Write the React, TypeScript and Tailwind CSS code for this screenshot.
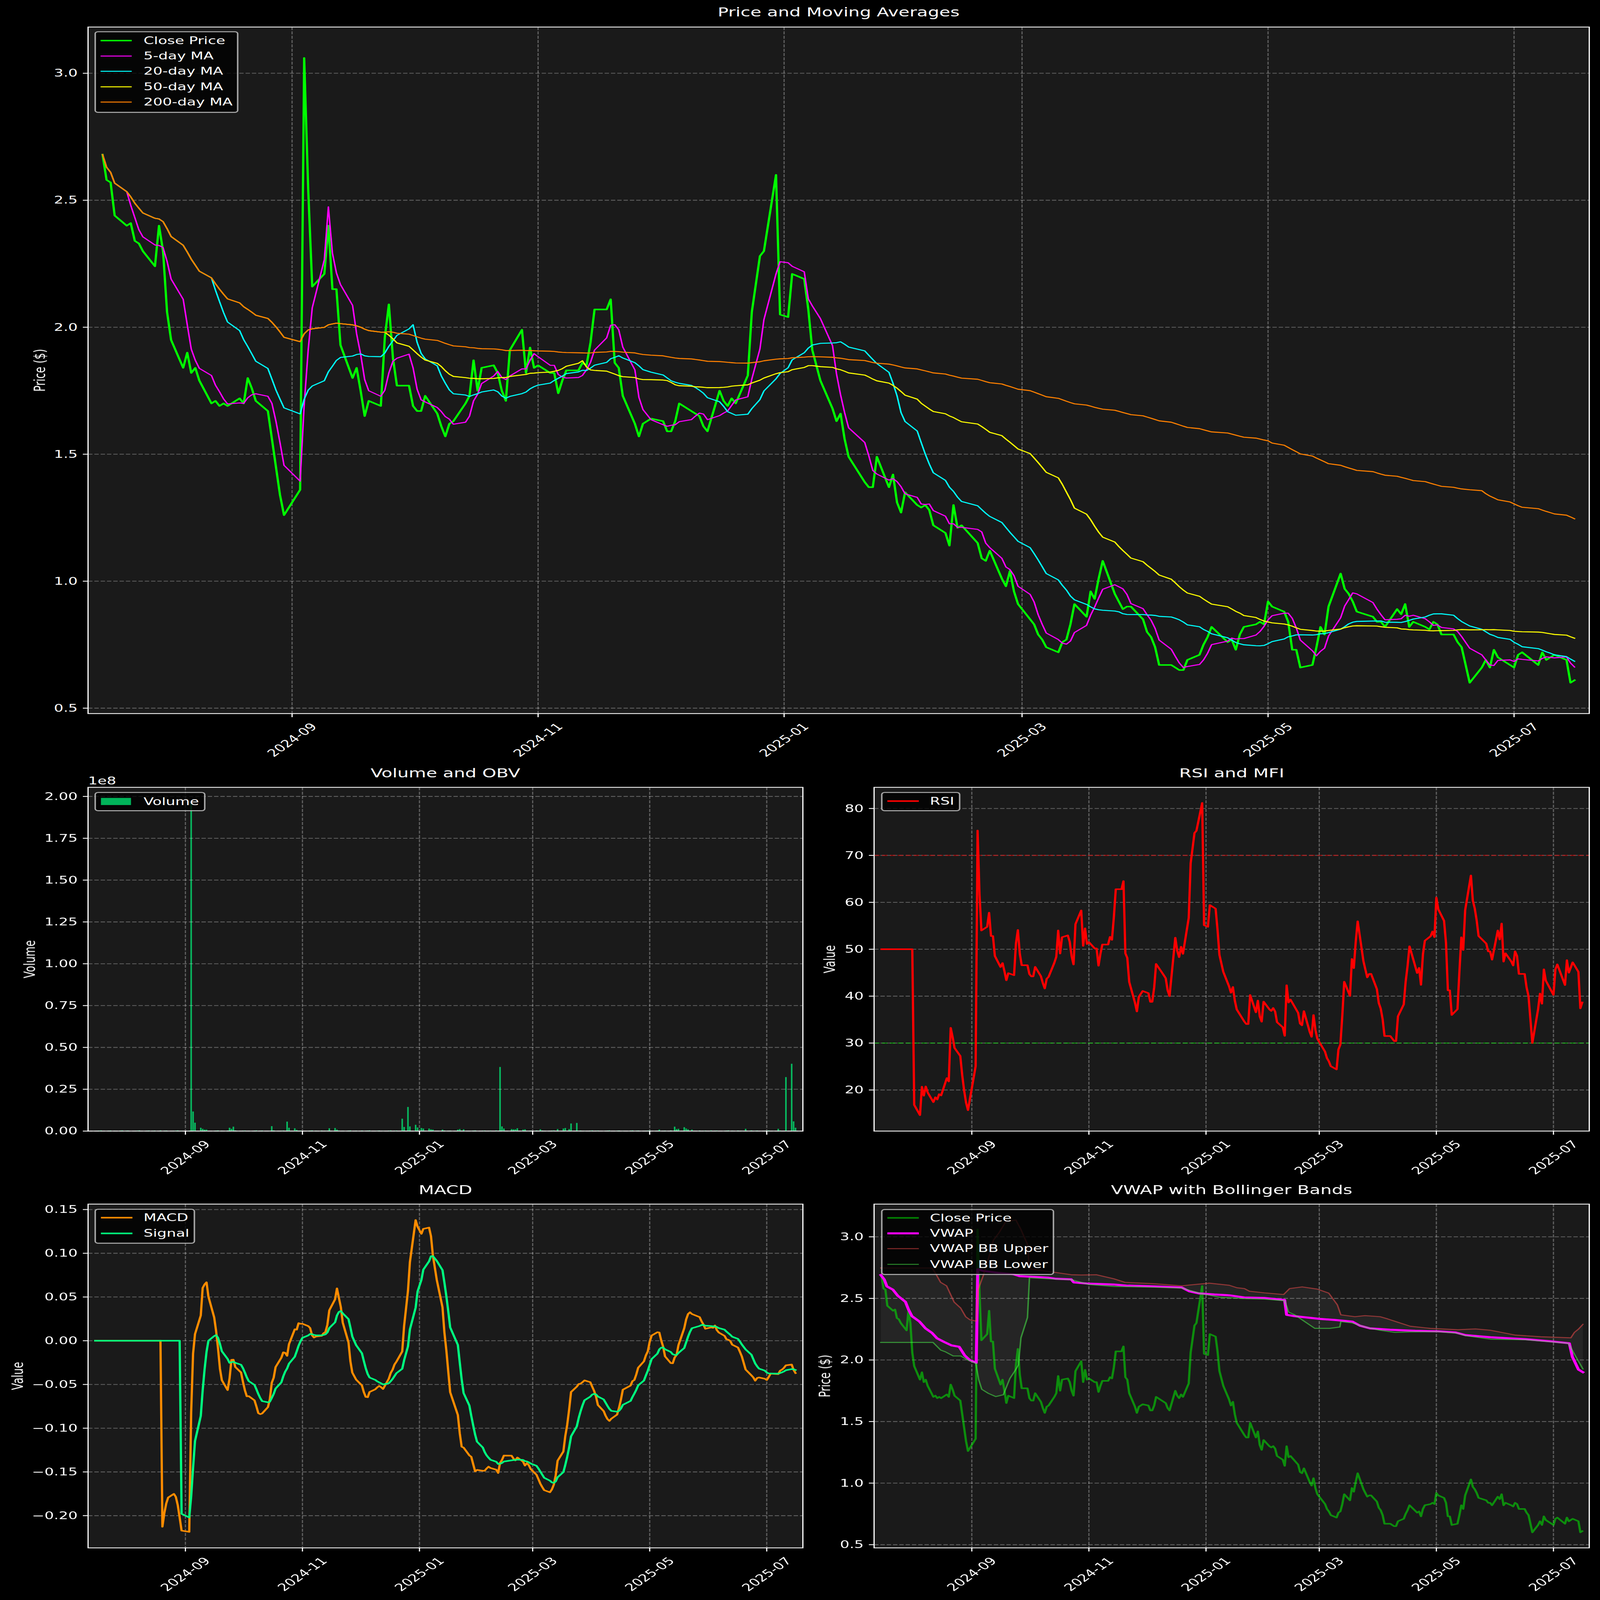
import React, { useEffect, useState } from "react";

type Pt = [number, number];

// zoomed crop coordinates back to page pixels
const crop = (ox: number, oy: number, w: number, h: number, p: number[]): Pt[] => {
  const out: Pt[] = [];
  for (let i = 0; i < p.length; i += 2) out.push([ox + (p[i] * w) / 1568, oy + (p[i + 1] * h) / 1568]);
  return out;
};

// --- trading calendar ---
const holidays = ["2024-09-02", "2024-11-28", "2024-12-25", "2025-01-01", "2025-01-09", "2025-01-20", "2025-02-17", "2025-04-18", "2025-05-26", "2025-06-19", "2025-07-04"];
const days: number[] = [];
for (let d = -47; d <= 318; d++) {
  const date = new Date(Date.UTC(2024, 8, 1 + d));
  const wd = date.getUTCDay();
  if (wd === 0 || wd === 6) continue;
  if (holidays.includes(date.toISOString().slice(0, 10))) continue;
  days.push(d);
}

const mainX = (d: number) => 816 + 11.267 * d;
const leftX = (d: number) => 518 + 5.36 * d;
const rightX = (d: number) => 2715 + 5.363 * d;
const mainY = (v: number) => 298 + (3 - v) * 1032.8;
const volY = (v: number) => 4600 - v * 680.5;
const rsiY = (v: number) => 3288 + (80 - v) * 19.08;
const macdY = (v: number) => 5452.6 - v * 3557;
const vwapY = (v: number) => 5030 + (3 - v) * 500.8;

// --- close price, read off the main chart ---
const closeRaw: Pt[] = [
  ...crop(270, 200, 800, 1900, [30, 352, 52, 437, 76, 447, 98, 557, 165, 591, 186, 584, 208, 642, 230, 652, 260, 675, 320, 727, 342, 593, 364, 680, 385, 880, 408, 925, 430, 977, 473, 1067, 495, 1018, 518, 1085, 540, 1070, 563, 1113, 628, 1187, 650, 1180, 672, 1196, 695, 1188, 718, 1196, 782, 1170, 805, 1187, 827, 1104, 870, 1180, 940, 1214, 962, 1310, 983, 1400, 1003, 1500, 1027, 1562, 1113, 1478, 1137, 30, 1158, 470, 1180, 795, 1250, 752, 1269, 592, 1290, 805, 1313, 805, 1335, 925, 1357, 990, 1402, 1102, 1424, 1070, 1447, 1150, 1468, 1230, 1490, 1180, 1557, 1195]),
  ...crop(1050, 1100, 800, 800, [50, 530, 71, 268, 93, 700, 116, 915, 182, 915, 204, 1078, 227, 1120, 248, 1120, 270, 997, 315, 1090, 337, 1140, 358, 1240, 381, 1322, 403, 1220, 425, 1280, 447, 1210, 490, 1060, 512, 1000, 535, 712, 558, 958, 580, 775, 647, 755, 668, 820, 690, 955, 712, 1040, 735, 630, 801, 470, 822, 815, 845, 612, 867, 775, 889, 752, 955, 815, 978, 815, 1000, 978, 1045, 795, 1110, 795, 1133, 730, 1155, 755, 1178, 570, 1198, 310, 1265, 310, 1288, 228, 1308, 735, 1332, 775, 1353, 1000, 1420, 1220, 1442, 1322, 1464, 1220, 1507, 1178]),
  ...crop(1840, 600, 800, 1600, [25, 1090, 47, 1130, 70, 1130, 92, 1090, 115, 1020, 180, 1050, 226, 1070, 247, 1108, 270, 1128, 315, 1030, 335, 970, 358, 1008, 380, 1028, 402, 1000, 424, 1016, 470, 935, 490, 905, 512, 655, 556, 433, 578, 410, 645, 110, 665, 663, 711, 674, 733, 503, 798, 522, 822, 650, 843, 805, 888, 848, 910, 930, 955, 1040, 975, 1088, 997, 1060, 1020, 1165, 1042, 1232, 1130, 1332, 1153, 1351, 1175, 1351, 1196, 1233, 1263, 1351, 1285, 1303, 1307, 1415, 1329, 1452, 1351, 1375, 1418, 1423, 1440, 1433, 1462, 1423, 1484, 1445, 1505, 1503]),
  ...crop(2620, 1800, 900, 1000, [38, 574, 58, 656, 77, 397, 97, 542, 117, 525, 195, 638, 215, 735, 235, 752, 255, 688, 315, 860, 333, 915, 352, 817, 372, 945, 392, 1026, 470, 1158, 490, 1222, 510, 1258, 529, 1302, 587, 1335, 607, 1268, 626, 1252, 646, 1160, 665, 1027, 724, 1108, 744, 945, 764, 996, 803, 752, 842, 885, 862, 960, 901, 1060, 921, 1043, 941, 1043, 1000, 1125, 1019, 1207, 1039, 1238, 1058, 1300, 1078, 1416, 1137, 1416, 1176, 1448, 1195, 1448, 1215, 1383, 1275, 1351, 1295, 1283, 1314, 1240, 1334, 1172, 1412, 1272, 1432, 1252, 1451, 1320, 1470, 1220, 1490, 1172]),
  ...crop(3500, 2200, 930, 600, [15, 885, 35, 853, 53, 885, 72, 635, 92, 695, 148, 745, 168, 870, 187, 1153, 206, 1153, 226, 1345, 283, 1317, 301, 1135, 320, 905, 339, 995, 358, 692, 414, 340, 433, 505, 452, 560, 472, 650, 491, 747, 566, 800, 585, 860, 604, 860, 624, 908, 680, 717, 699, 778, 718, 663, 737, 913, 757, 852, 812, 908, 832, 942, 851, 852, 870, 880, 889, 990, 946, 990, 965, 1072, 984, 1127, 1023, 1508, 1079, 1340, 1098, 1255, 1118, 1345, 1136, 1150, 1155, 1237, 1232, 1345, 1249, 1207, 1269, 1177, 1345, 1317, 1364, 1177, 1384, 1265, 1422, 1210, 1478, 1262, 1497, 1507, 1518, 1467]),
];

const nearest = (x: number, map: (d: number) => number) => {
  let best = 0;
  days.forEach((d, i) => {
    if (Math.abs(map(d) - x) < Math.abs(map(days[best]) - x)) best = i;
  });
  return best;
};

const close: number[] = (() => {
  const known: (number | null)[] = days.map(() => null);
  closeRaw.forEach(([x, y]) => {
    known[nearest(x, mainX)] = 3 - (y - 298) / 1032.8;
  });
  const out: number[] = [];
  let prev = 0;
  days.forEach((d, i) => {
    if (known[i] !== null) {
      out[i] = known[i] as number;
      prev = i;
      return;
    }
    let next = i;
    while (known[next] === null && next < days.length - 1) next++;
    const t = (d - days[prev]) / (days[next] - days[prev]);
    out[i] = (known[prev] as number) + t * ((known[next] as number) - (known[prev] as number));
  });
  return out.map((v) => Math.round(v * 100) / 100);
})();

const rolling = (s: number[], n: number) =>
  s.map((_, i) => {
    const w = s.slice(Math.max(0, i - n + 1), i + 1);
    return w.reduce((a, b) => a + b, 0) / w.length;
  });

const ewm = (s: (number | null)[], alpha: number, minPeriods: number) => {
  let cur: number | null = null;
  let count = 0;
  return s.map((v) => {
    if (v === null) return null;
    cur = cur === null ? v : (1 - alpha) * cur + alpha * v;
    count++;
    return count >= minPeriods ? cur : null;
  });
};

const rsi = (() => {
  const up = close.map((v, i) => (i > 0 ? Math.max(v - close[i - 1], 0) : 0));
  const down = close.map((v, i) => (i > 0 ? Math.max(close[i - 1] - v, 0) : 0));
  const u = ewm(up, 1 / 14, 14);
  const dn = ewm(down, 1 / 14, 14);
  return u.map((v, i) => {
    if (v === null) return 50;
    const d = dn[i] as number;
    return d === 0 ? 100 : 100 - 100 / (1 + v / d);
  });
})();

const fast = ewm(close, 2 / 13, 12);
const slow = ewm(close, 2 / 27, 26);
const macdRaw = fast.map((v, i) => (v === null || slow[i] === null ? null : v - (slow[i] as number)));
const signal = ewm(macdRaw, 2 / 10, 9).map((v) => v ?? 0);
const macd = macdRaw.map((v) => v ?? 0);

// --- volume: big bars read off the chart, the rest is background noise ---
const volume: number[] = days.map((_, i) => (0.5 + ((i * 37) % 7) * 0.4) / 680.5);
const volBars = crop(0, 3100, 2270, 1700, [368.5, 150, 373, 1310, 377, 1352, 388, 1371, 392, 1375, 396, 1378, 400, 1378, 443, 1371, 447, 1375, 451, 1367, 525, 1365, 555, 1348, 558, 1371, 570, 1373, 574, 1379, 636, 1373, 647, 1372, 651, 1378, 776, 1337, 780, 1368, 787, 1293, 791, 1366, 802, 1360, 806, 1370, 810, 1357, 813, 1372, 817, 1374, 828, 1374, 832, 1377, 836, 1378, 854, 1378, 883, 1378, 887, 1376, 895, 1377, 965, 1143, 969, 1366, 972, 1374, 987, 1376, 991, 1377, 995, 1377, 999, 1373, 1009, 1378, 1013, 1377, 1043, 1377, 1076, 1376, 1088, 1374, 1092, 1372, 1099, 1376, 1102, 1355, 1112, 1353, 1273, 1378, 1301, 1367, 1305, 1376, 1309, 1375, 1320, 1369, 1324, 1374, 1328, 1377, 1335, 1378, 1438, 1375, 1501, 1375, 1516, 1181, 1527, 1131, 1531, 1347, 1534, 1371]);
volBars.forEach(([x, y]) => {
  volume[nearest(x, leftX)] = (4600 - y) / 680.5;
});

// --- VWAP and its bands, read off the lower right chart ---
const vw = (p: number[]) => crop(2270, 4780, 2200, 1727, p);
const vwap = vw([136, 368, 143, 385, 148, 410, 160, 422, 170, 445, 185, 467, 191, 495, 198, 520, 213, 540, 225, 565, 238, 582, 248, 602, 262, 615, 277, 628, 292, 633, 303, 665, 313, 682, 326, 692, 329, 347, 340, 353, 370, 360, 400, 365, 412, 372, 470, 378, 485, 382, 515, 384, 520, 395, 550, 400, 600, 403, 625, 407, 680, 410, 735, 414, 750, 428, 770, 436, 800, 440, 830, 443, 860, 451, 900, 453, 940, 460, 944, 515, 960, 520, 985, 525, 1010, 530, 1040, 534, 1075, 540, 1090, 555, 1110, 565, 1150, 570, 1200, 574, 1245, 576, 1280, 580, 1300, 590, 1350, 598, 1420, 605, 1470, 613, 1507, 620, 1513, 670, 1525, 717, 1534, 727]);
const bbUpper = vw([136, 342, 238, 342, 245, 362, 255, 395, 267, 408, 275, 440, 282, 468, 295, 490, 305, 522, 313, 533, 326, 538, 330, 420, 340, 370, 353, 290, 360, 240, 372, 210, 385, 170, 405, 165, 415, 200, 428, 255, 432, 345, 470, 355, 515, 367, 535, 368, 565, 367, 600, 382, 622, 395, 680, 400, 735, 408, 750, 405, 790, 398, 830, 406, 845, 415, 860, 418, 870, 428, 900, 434, 938, 440, 950, 418, 975, 412, 1005, 420, 1028, 435, 1045, 478, 1052, 515, 1080, 522, 1100, 518, 1130, 522, 1145, 530, 1165, 542, 1190, 557, 1230, 565, 1285, 570, 1320, 567, 1350, 572, 1400, 590, 1450, 596, 1510, 600, 1517, 580, 1525, 568, 1534, 550]);
const bbLower = vw([136, 617, 240, 617, 255, 645, 265, 652, 280, 667, 295, 667, 310, 683, 325, 693, 331, 755, 337, 790, 350, 805, 365, 817, 380, 810, 393, 750, 402, 725, 410, 700, 415, 600, 428, 525, 432, 378, 470, 382, 515, 385, 550, 403, 600, 410, 680, 413, 735, 416, 770, 435, 810, 450, 860, 455, 900, 457, 940, 463, 948, 505, 960, 515, 980, 540, 1000, 565, 1030, 565, 1050, 560, 1052, 540, 1075, 545, 1100, 560, 1130, 572, 1160, 580, 1190, 578, 1245, 577, 1285, 583, 1300, 592, 1350, 605, 1420, 607, 1505, 620, 1520, 670, 1534, 715]);

const toPoints = (p: Pt[]) => p.map(([x, y]) => `${x.toFixed(1)},${y.toFixed(1)}`).join(" ");
const series = (vals: number[], xf: (d: number) => number, yf: (v: number) => number) =>
  toPoints(vals.map((v, i) => [xf(days[i]), yf(v)]));

const months: [number, string][] = [[0, "2024-09"], [61, "2024-11"], [122, "2025-01"], [181, "2025-03"], [242, "2025-05"], [303, "2025-07"]];
const LW = 4.17;

function Line({ points, color, width, opacity = 1 }: { points: string; color: string; width: number; opacity?: number }) {
  return <polyline points={points} fill="none" stroke={color} strokeWidth={width} strokeOpacity={opacity} strokeLinejoin="round" strokeLinecap="square" />;
}

type LegendRow = { label: string; y: number; color: string; width: number; opacity?: number; patch?: boolean };

function Legend({ x, y, w, h, hx, hw, tx, rows }: { x: number; y: number; w: number; h: number; hx: number; hw: number; tx: number; rows: LegendRow[] }) {
  return (
    <g>
      <rect x={x} y={y} width={w} height={h} rx={8} fill="#000" fillOpacity={0.8} stroke="#ccc" strokeOpacity={0.8} strokeWidth={LW} />
      {rows.map((r) => (
        <g key={r.label}>
          {r.patch ? (
            <rect x={hx} y={r.y - 15} width={hw} height={29} fill={r.color} fillOpacity={r.opacity ?? 1} />
          ) : (
            <line x1={hx} x2={hx + hw} y1={r.y} y2={r.y} stroke={r.color} strokeWidth={r.width} strokeOpacity={r.opacity ?? 1} />
          )}
          <text x={tx} y={r.y} dominantBaseline="central" className="fill-white text-[41.67px]">
            {r.label}
          </text>
        </g>
      ))}
    </g>
  );
}

type ChartProps = {
  view: [number, number, number, number];
  box: { l: number; t: number; r: number; b: number };
  xMap: (d: number) => number;
  yTicks: [number, string][];
  yLabel: string;
  yLabelX: number;
  children: React.ReactNode;
  overlay?: React.ReactNode;
};

function Chart({ view, box, xMap, yTicks, yLabel, yLabelX, children, overlay }: ChartProps) {
  const { l, t, r, b } = box;
  return (
    <svg viewBox={view.join(" ")} width={view[2]} height={view[3]} className="block overflow-visible">
      <rect x={l} y={t} width={r - l} height={b - t} fill="#1a1a1a" />
      {children}
      {months.map(([d]) => (
        <line key={d} x1={xMap(d)} x2={xMap(d)} y1={t} y2={b} stroke="#fff" strokeOpacity={0.3} strokeWidth={3.3} strokeDasharray="12.3 5.3" />
      ))}
      {yTicks.map(([y, s]) => (
        <line key={s} x1={l} x2={r} y1={y} y2={y} stroke="#fff" strokeOpacity={0.3} strokeWidth={3.3} strokeDasharray="12.3 5.3" />
      ))}
      {overlay}
      <rect x={l} y={t} width={r - l} height={b - t} fill="none" stroke="#fff" strokeWidth={3.33} />
      {months.map(([d, s]) => (
        <g key={s}>
          <line x1={xMap(d)} x2={xMap(d)} y1={b} y2={b + 14.6} stroke="#fff" strokeWidth={3.33} />
          <text
            x={xMap(d)}
            y={b + 107}
            textAnchor="middle"
            dominantBaseline="central"
            transform={`rotate(-45 ${xMap(d)} ${b + 107})`}
            className="fill-white text-[41.67px]"
          >
            {s}
          </text>
        </g>
      ))}
      {yTicks.map(([y, s]) => (
        <g key={s}>
          <line x1={l - 14.6} x2={l} y1={y} y2={y} stroke="#fff" strokeWidth={3.33} />
          <text x={l - 29} y={y} textAnchor="end" dominantBaseline="central" className="fill-white text-[41.67px]">
            {s}
          </text>
        </g>
      ))}
      <text
        x={yLabelX}
        y={(t + b) / 2}
        textAnchor="middle"
        dominantBaseline="central"
        transform={`rotate(-90 ${yLabelX} ${(t + b) / 2})`}
        className="fill-white text-[41.67px]"
      >
        {yLabel}
      </text>
    </svg>
  );
}

const priceTicks = (f: (v: number) => number): [number, string][] =>
  [3, 2.5, 2, 1.5, 1, 0.5].map((v) => [f(v), v.toFixed(1)]);

function PriceChart() {
  return (
    <Chart
      view={[0, 100, 4470, 2990]}
      box={{ l: 246, t: 110, r: 4440, b: 2902 }}
      xMap={mainX}
      yTicks={priceTicks(mainY)}
      yLabel="Price ($)"
      yLabelX={112}
      overlay={
        <>
          <Line points={series(close, mainX, mainY)} color="#00ff00" width={6.25} />
          <Line points={series(rolling(close, 5), mainX, mainY)} color="#ff00ff" width={LW} />
          <Line points={series(rolling(close, 20), mainX, mainY)} color="#00ffff" width={LW} />
          <Line points={series(rolling(close, 50), mainX, mainY)} color="#ffff00" width={LW} />
          <Line points={series(rolling(close, 200), mainX, mainY)} color="#ff8000" width={LW} />
          <Legend
            x={266}
            y={129}
            w={398}
            h={328}
            hx={281}
            hw={87}
            tx={401}
            rows={[
              { label: "Close Price", y: 165, color: "#00ff00", width: 6.25 },
              { label: "5-day MA", y: 228, color: "#ff00ff", width: LW },
              { label: "20-day MA", y: 290, color: "#00ffff", width: LW },
              { label: "50-day MA", y: 353, color: "#ffff00", width: LW },
              { label: "200-day MA", y: 415, color: "#ff8000", width: LW },
            ]}
          />
        </>
      }
    >
      <g />
    </Chart>
  );
}

function VolumeChart() {
  const ticks: [number, string][] = [2, 1.75, 1.5, 1.25, 1, 0.75, 0.5, 0.25, 0].map((v) => [volY(v), v.toFixed(2)]);
  return (
    <Chart
      view={[0, 3198, 2270, 1582]}
      box={{ l: 246, t: 3202, r: 2243, b: 4600 }}
      xMap={leftX}
      yTicks={ticks}
      yLabel="Volume"
      yLabelX={84}
      overlay={
        <>
          <Legend
            x={266}
            y={3223}
            w={306}
            h={74}
            hx={282}
            hw={84}
            tx={401}
            rows={[{ label: "Volume", y: 3260, color: "#00ff7f", width: 0, opacity: 0.7, patch: true }]}
          />
          <text x={246} y={3176} dominantBaseline="central" className="fill-white text-[41.67px]">
            1e8
          </text>
        </>
      }
    >
      {volume.map((v, i) => (
        <rect key={days[i]} x={leftX(days[i]) - 2.15} y={volY(v)} width={4.3} height={4600 - volY(v)} fill="#00ff7f" fillOpacity={0.7} />
      ))}
    </Chart>
  );
}

function RsiChart() {
  const ticks: [number, string][] = [80, 70, 60, 50, 40, 30, 20].map((v) => [rsiY(v), String(v)]);
  return (
    <Chart
      view={[2270, 3198, 2200, 1582]}
      box={{ l: 2442, t: 3202, r: 4440, b: 4600 }}
      xMap={rightX}
      yTicks={ticks}
      yLabel="Value"
      yLabelX={2319}
      overlay={
        <>
          <line x1={2442} x2={4440} y1={rsiY(70)} y2={rsiY(70)} stroke="#ff0000" strokeOpacity={0.5} strokeWidth={LW} strokeDasharray="15.4 6.7" />
          <line x1={2442} x2={4440} y1={rsiY(30)} y2={rsiY(30)} stroke="#00ff00" strokeOpacity={0.5} strokeWidth={LW} strokeDasharray="15.4 6.7" />
          <Line points={series(rsi, rightX, rsiY)} color="#ff0000" width={6.25} />
          <Legend x={2463.5} y={3223} w={217.5} h={74} hx={2479} hw={88} tx={2598} rows={[{ label: "RSI", y: 3258, color: "#ff0000", width: 6.25 }]} />
        </>
      }
    >
      <g />
    </Chart>
  );
}

function MacdChart() {
  const ticks: [number, string][] = [0.15, 0.1, 0.05, 0, -0.05, -0.1, -0.15, -0.2].map((v) => [
    macdY(v),
    (v < 0 ? "\u2212" : "") + Math.abs(v).toFixed(2),
  ]);
  return (
    <Chart
      view={[0, 4894, 2270, 1613]}
      box={{ l: 246, t: 4897, r: 2243, b: 6295 }}
      xMap={leftX}
      yTicks={ticks}
      yLabel="Value"
      yLabelX={50}
      overlay={
        <>
          <Line points={series(macd, leftX, macdY)} color="#ff8c00" width={6.25} />
          <Line points={series(signal, leftX, macdY)} color="#00ff7f" width={6.25} />
          <Legend
            x={266}
            y={4918}
            w={277}
            h={138}
            hx={282}
            hw={88}
            tx={401}
            rows={[
              { label: "MACD", y: 4952, color: "#ff8c00", width: 6.25 },
              { label: "Signal", y: 5016, color: "#00ff7f", width: 6.25 },
            ]}
          />
        </>
      }
    >
      <g />
    </Chart>
  );
}

function VwapChart() {
  return (
    <Chart
      view={[2270, 4894, 2200, 1613]}
      box={{ l: 2442, t: 4897, r: 4440, b: 6295 }}
      xMap={rightX}
      yTicks={priceTicks(vwapY)}
      yLabel="Price ($)"
      yLabelX={2305}
      overlay={
        <>
          <Line points={series(close, rightX, vwapY)} color="#00ff00" width={6.25} opacity={0.5} />
          <Line points={toPoints(vwap)} color="#ff00ff" width={8.33} />
          <Line points={toPoints(bbUpper)} color="#ff4d4d" width={LW} opacity={0.5} />
          <Line points={toPoints(bbLower)} color="#4dff4d" width={LW} opacity={0.5} />
          <Legend
            x={2463.5}
            y={4919}
            w={479.5}
            h={264}
            hx={2479}
            hw={88}
            tx={2598}
            rows={[
              { label: "Close Price", y: 4953, color: "#00ff00", width: 6.25, opacity: 0.5 },
              { label: "VWAP", y: 5016, color: "#ff00ff", width: 8.33 },
              { label: "VWAP BB Upper", y: 5078, color: "#ff4d4d", width: LW, opacity: 0.5 },
              { label: "VWAP BB Lower", y: 5142, color: "#4dff4d", width: LW, opacity: 0.5 },
            ]}
          />
        </>
      }
    >
      <polygon points={toPoints([...bbUpper, ...[...bbLower].reverse()])} fill="#fff" fillOpacity={0.05} />
    </Chart>
  );
}

// The page is laid out at 4470x6507; fit it to whatever window it actually gets.
function useFit() {
  const read = () => ({ sx: window.innerWidth / 4470, sy: window.innerHeight / 6507 });
  const [fit, setFit] = useState(read);
  useEffect(() => {
    const onResize = () => setFit(read());
    window.addEventListener("resize", onResize);
    return () => window.removeEventListener("resize", onResize);
  }, []);
  return fit;
}

export default function App() {
  const { sx, sy } = useFit();
  return (
    <div className="w-screen h-screen bg-black overflow-hidden">
      <div
        className="w-[4470px] h-[6507px] bg-black text-white font-['DejaVu_Sans',sans-serif] origin-top-left"
        style={{ transform: `scale(${sx}, ${sy})` }}
      >
        <section>
          <h2 className="h-[100px] flex items-center justify-center pl-[246px] pr-[30px] text-[50px]">Price and Moving Averages</h2>
          <PriceChart />
        </section>
        <div className="grid grid-cols-[2270px_2200px]">
          <section>
            <h2 className="h-[108px] flex items-center justify-center pl-[246px] pr-[27px] text-[50px]">Volume and OBV</h2>
            <VolumeChart />
          </section>
          <section>
            <h2 className="h-[108px] flex items-center justify-center pl-[172px] pr-[30px] text-[50px]">RSI and MFI</h2>
            <RsiChart />
          </section>
          <section>
            <h2 className="h-[114px] pt-[6px] flex items-center justify-center pl-[246px] pr-[27px] text-[50px]">MACD</h2>
            <MacdChart />
          </section>
          <section>
            <h2 className="h-[114px] pt-[6px] flex items-center justify-center pl-[172px] pr-[30px] text-[50px]">VWAP with Bollinger Bands</h2>
            <VwapChart />
          </section>
        </div>
      </div>
    </div>
  );
}
